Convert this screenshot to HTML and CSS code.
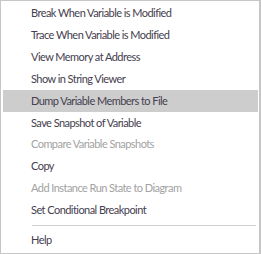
FILE: index.html
```html
<!DOCTYPE html>
<html lang="en">
<head>
    <meta charset="UTF-8">
    <title>Context Menu</title>
    <link rel="stylesheet" href="styles.css">
</head>
<body>
    <div class="menu">
        <div class="menu-item">Break When Variable is Modified</div>
        <div class="menu-item">Trace When Variable is Modified</div>
        <div class="menu-item">View Memory at Address</div>
        <div class="menu-item">Show in String Viewer</div>
        <div class="menu-item active">Dump Variable Members to File</div>
        <div class="menu-item">Save Snapshot of Variable</div>
        <div class="menu-item disabled">Compare Variable Snapshots</div>
        <div class="menu-item">Copy</div>
        <div class="menu-item disabled">Add Instance Run State to Diagram</div>
        <div class="menu-item">Set Conditional Breakpoint</div>
        <div class="separator"></div>
        <div class="menu-item">Help</div>
    </div>
</body>
</html>
```

FILE: styles.css
```css
* {
    margin: 0;
    padding: 0;
    box-sizing: border-box;
}

body {
    margin: 0;
    background-color: #ffffff;
    font-family: Lato, "Liberation Sans", sans-serif;
    font-size: 11px;
    letter-spacing: -0.55px;
}

.menu {
    width: 261px;
    height: 254px;
    background-color: #ffffff;
    border: 1px solid #c6c6c6;
    border-right: 2px solid #c6c6c6;
    padding: 1px 1px 2px 2px;
    display: flex;
    flex-direction: column;
}

.menu-item {
    height: 22px;
    line-height: 21px;
    padding-left: 28px;
    color: #45404e;
    white-space: nowrap;
}

.menu-item.active {
    background-color: #cdcdcd;
}

.menu-item.disabled {
    color: #a2a2a2;
}

.separator {
    height: 1px;
    margin: 4px 2px 3px 29px;
    background-color: #d0d0d0;
}
```
